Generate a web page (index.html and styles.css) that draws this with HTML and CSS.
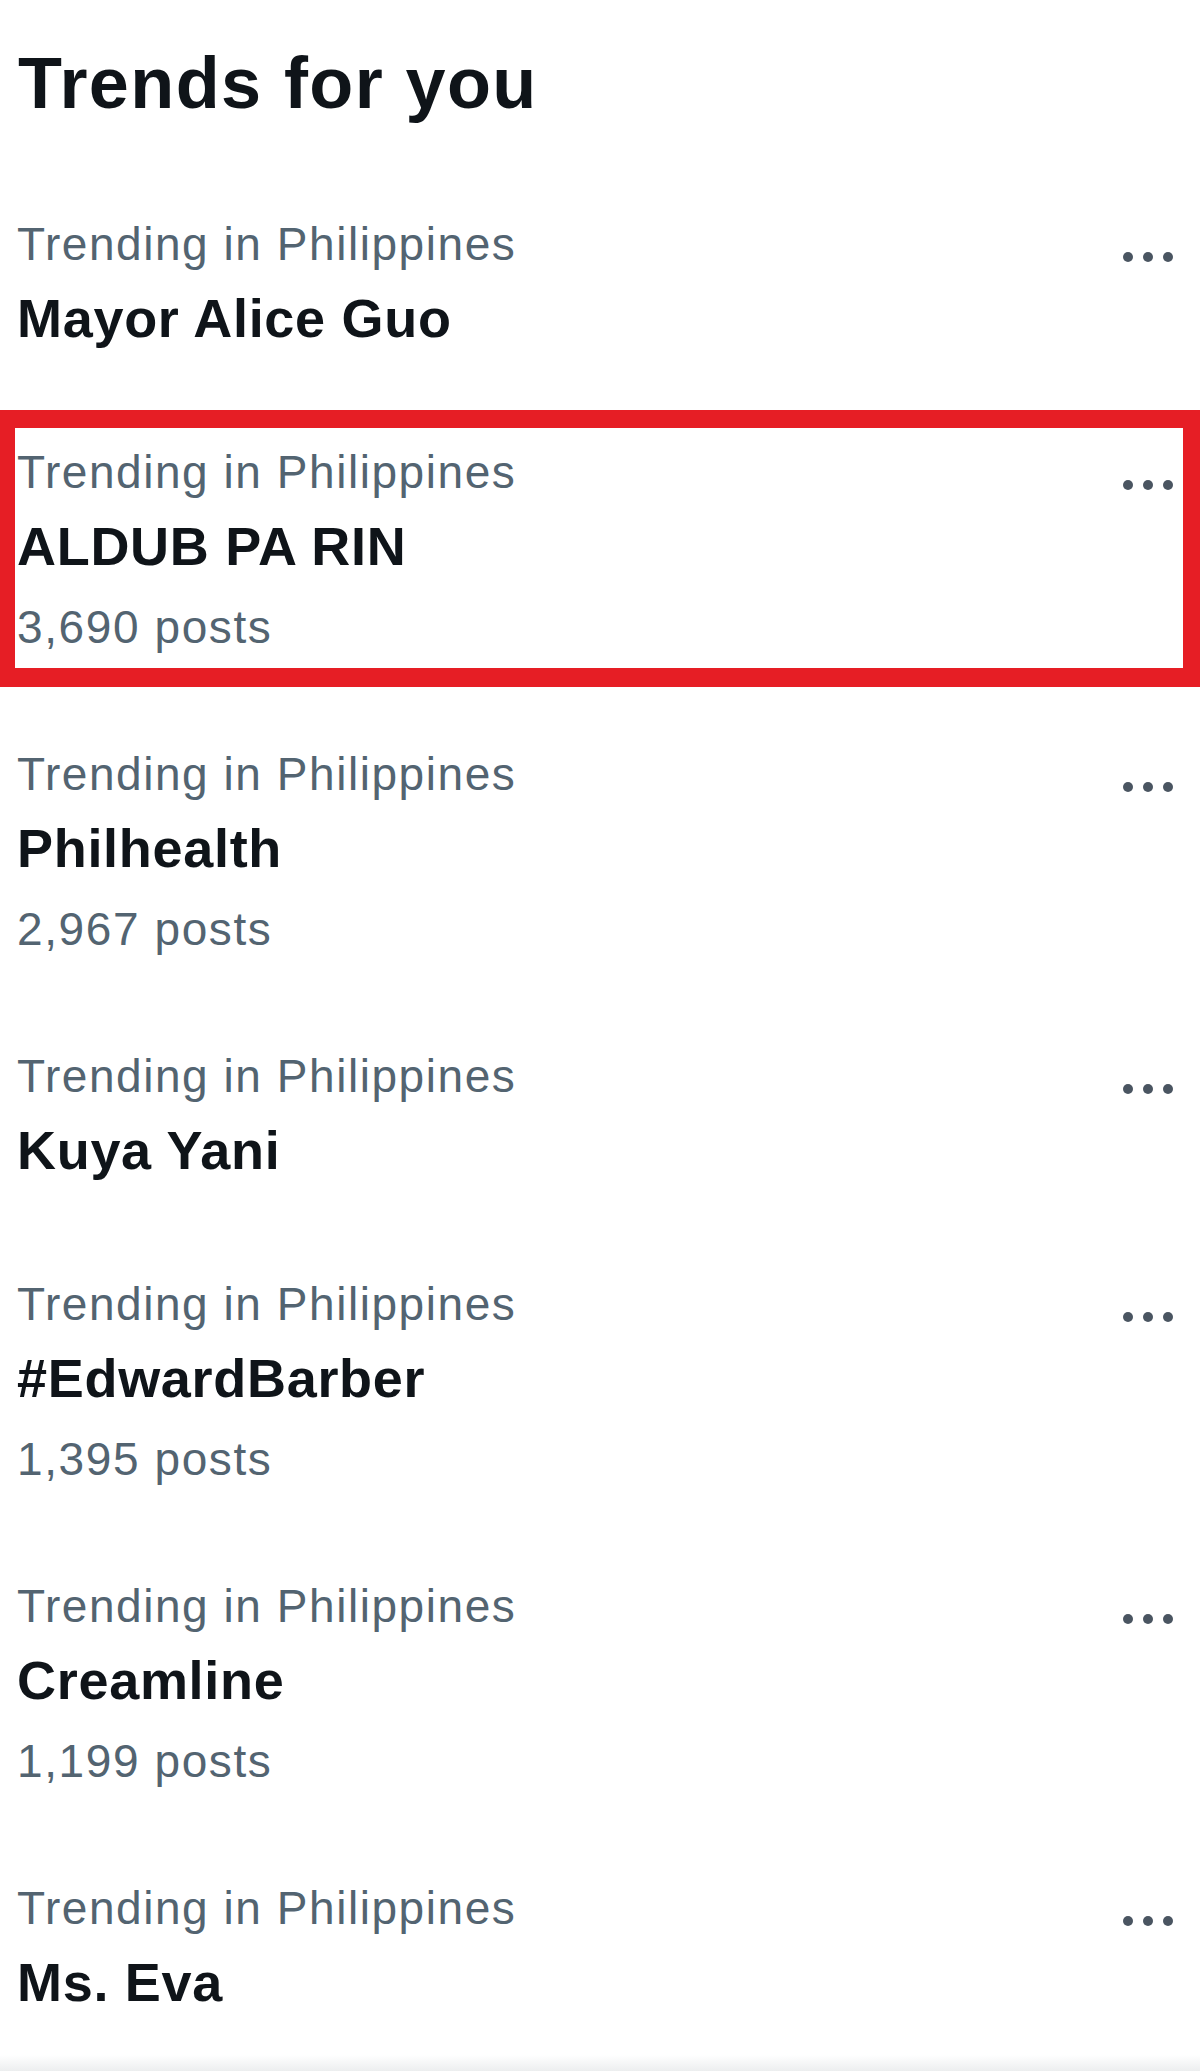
FILE: index.html
```html
<!DOCTYPE html>
<html lang="en">
<head>
<meta charset="utf-8">
<title>Trends for you</title>
<link rel="stylesheet" href="styles.css">
</head>
<body>
<main class="panel">
  <h2 class="panel-title">Trends for you</h2>
  <ul class="trend-list">
    <li class="trend">
      <div class="trend-body">
        <span class="trend-meta">Trending in Philippines</span>
        <span class="trend-name">Mayor Alice Guo</span>
      </div>
      <div class="trend-more" role="button" aria-label="More"><svg viewBox="0 0 50 10" width="50" height="10"><circle cx="5" cy="5" r="5"/><circle cx="25" cy="5" r="5"/><circle cx="45" cy="5" r="5"/></svg></div>
    </li>
    <li class="trend trend-highlight">
      <div class="trend-body">
        <span class="trend-meta">Trending in Philippines</span>
        <span class="trend-name">ALDUB PA RIN</span>
        <span class="trend-count">3,690 posts</span>
      </div>
      <div class="trend-more" role="button" aria-label="More"><svg viewBox="0 0 50 10" width="50" height="10"><circle cx="5" cy="5" r="5"/><circle cx="25" cy="5" r="5"/><circle cx="45" cy="5" r="5"/></svg></div>
    </li>
    <li class="trend">
      <div class="trend-body">
        <span class="trend-meta">Trending in Philippines</span>
        <span class="trend-name">Philhealth</span>
        <span class="trend-count">2,967 posts</span>
      </div>
      <div class="trend-more" role="button" aria-label="More"><svg viewBox="0 0 50 10" width="50" height="10"><circle cx="5" cy="5" r="5"/><circle cx="25" cy="5" r="5"/><circle cx="45" cy="5" r="5"/></svg></div>
    </li>
    <li class="trend">
      <div class="trend-body">
        <span class="trend-meta">Trending in Philippines</span>
        <span class="trend-name">Kuya Yani</span>
      </div>
      <div class="trend-more" role="button" aria-label="More"><svg viewBox="0 0 50 10" width="50" height="10"><circle cx="5" cy="5" r="5"/><circle cx="25" cy="5" r="5"/><circle cx="45" cy="5" r="5"/></svg></div>
    </li>
    <li class="trend">
      <div class="trend-body">
        <span class="trend-meta">Trending in Philippines</span>
        <span class="trend-name">#EdwardBarber</span>
        <span class="trend-count">1,395 posts</span>
      </div>
      <div class="trend-more" role="button" aria-label="More"><svg viewBox="0 0 50 10" width="50" height="10"><circle cx="5" cy="5" r="5"/><circle cx="25" cy="5" r="5"/><circle cx="45" cy="5" r="5"/></svg></div>
    </li>
    <li class="trend">
      <div class="trend-body">
        <span class="trend-meta">Trending in Philippines</span>
        <span class="trend-name">Creamline</span>
        <span class="trend-count">1,199 posts</span>
      </div>
      <div class="trend-more" role="button" aria-label="More"><svg viewBox="0 0 50 10" width="50" height="10"><circle cx="5" cy="5" r="5"/><circle cx="25" cy="5" r="5"/><circle cx="45" cy="5" r="5"/></svg></div>
    </li>
    <li class="trend">
      <div class="trend-body">
        <span class="trend-meta">Trending in Philippines</span>
        <span class="trend-name">Ms. Eva</span>
      </div>
      <div class="trend-more" role="button" aria-label="More"><svg viewBox="0 0 50 10" width="50" height="10"><circle cx="5" cy="5" r="5"/><circle cx="25" cy="5" r="5"/><circle cx="45" cy="5" r="5"/></svg></div>
    </li>
  </ul>
</main>
</body>
</html>
```

FILE: styles.css
```css
html, body {
  margin: 0;
  padding: 0;
  background: #ffffff;
}

body {
  font-family: "Liberation Sans", Arial, sans-serif;
  color: #0f1419;
}

.panel {
  min-height: 100vh;
  background: linear-gradient(to bottom, #ffffff calc(100% - 16px), #eceeef 100%);
}

.panel-title {
  margin: 0;
  padding: 40px 0 45px 18px;
  font-size: 72px;
  line-height: 86px;
  font-weight: 700;
  letter-spacing: 1.4px;
  color: #0f1419;
}

.trend-list {
  list-style: none;
  margin: 0;
  padding: 0;
}

.trend {
  position: relative;
  display: flex;
  justify-content: space-between;
  align-items: flex-start;
  padding: 40px 27px 40px 17px;
}

.trend-body {
  display: flex;
  flex-direction: column;
}

.trend-meta {
  font-size: 46px;
  line-height: 66px;
  letter-spacing: 1.55px;
  color: #536471;
}

.trend-name {
  font-size: 54px;
  line-height: 82px;
  font-weight: 700;
  letter-spacing: 0.7px;
  color: #0f1419;
}

.trend-count {
  margin-top: 6px;
  font-size: 46px;
  line-height: 68px;
  letter-spacing: 1.6px;
  color: #536471;
}

.trend-more {
  margin-top: 41px;
  width: 50px;
  height: 10px;
  flex: none;
}

.trend-more svg {
  display: block;
  fill: #4a5561;
}

.trend-highlight::after {
  content: "";
  position: absolute;
  left: 0;
  right: 0;
  top: 11px;
  bottom: 14px;
  border-style: solid;
  border-color: #e61e25;
  border-width: 18px 17px 19px 15px;
  pointer-events: none;
}
```
